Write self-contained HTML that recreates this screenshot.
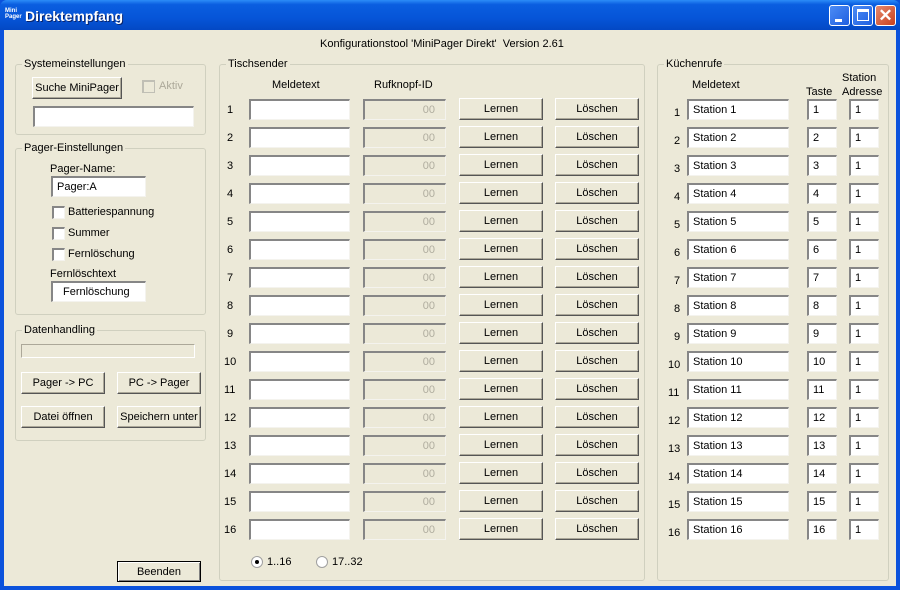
<!DOCTYPE html>
<html><head><meta charset="utf-8"><style>
*{box-sizing:border-box}
body{margin:0;width:900px;height:590px;overflow:hidden;background:#0B52DC;font-family:"Liberation Sans",sans-serif;font-size:11px;color:#000;position:relative}
.a{position:absolute}
#tb{left:0;top:0;width:900px;height:30px;background:linear-gradient(#2C8CF8 0%,#0A5EE0 15%,#0655D8 60%,#0348C4 100%);border-radius:7px 7px 0 0}
#client{left:4px;top:30px;width:892px;height:556px;background:#ECE9D8}
.g{position:absolute;border:1px solid #D0D0BF;border-radius:3px}
.lg{position:absolute;top:-7px;left:6px;background:#ECE9D8;padding:0 2px;line-height:12px}
.t{position:absolute;white-space:nowrap;line-height:13px}
.in{position:absolute;background:#fff;border-top:2px solid #868686;border-left:2px solid #868686;border-right:1px solid #F4F3EE;border-bottom:1px solid #F4F3EE;height:21px;line-height:18px;padding-left:4px;white-space:nowrap}
.dis{background:#ECE9D8;color:#B0AD9F;text-align:right;padding-right:10px}
.b{position:absolute;background:#ECE9D8;border:1px solid;border-color:#fff #555 #555 #fff;box-shadow:inset -1px -1px #ACA899;height:22px;line-height:21px;text-align:center;white-space:nowrap}
.cb{position:absolute;width:13px;height:13px;background:#fff;border-top:2px solid #868686;border-left:2px solid #868686;border-right:1px solid #f4f3ee;border-bottom:1px solid #f4f3ee}
.tbb{position:absolute;top:5px;width:21px;height:21px;border:1px solid #fff;border-radius:3px;background:linear-gradient(135deg,#4C8CF5,#1F5FE0)}
</style></head><body>
<div id="tb" class="a">
 <div class="a" style="left:5px;top:8px;color:#fff;font-size:6px;line-height:6px;font-weight:bold">Mini<br>Pager</div>
 <div class="a" style="left:25px;top:8px;color:#fff;font-weight:bold;font-size:14px;text-shadow:1px 1px #0a246a">Direktempfang</div>
 <div class="tbb" style="left:829px"><div class="a" style="left:5px;top:13px;width:7px;height:3px;background:#fff"></div></div>
 <div class="tbb" style="left:852px"><div class="a" style="left:4px;top:3px;width:12px;height:12px;border:1px solid #fff;border-top-width:3px"></div></div>
 <div class="tbb" style="left:875px;background:linear-gradient(135deg,#E58A6E,#C8401E)"><div class="a" style="left:0;top:0;width:19px;height:19px;color:#fff;font-size:17px;line-height:19px;text-align:center;font-weight:bold">✕</div></div>
</div>
<div id="client" class="a"></div>
<div class="t" style="left:320px;top:38px">Konfigurationstool 'MiniPager Direkt'&nbsp; Version 2.61</div>

<div class="g" style="left:15px;top:64px;width:191px;height:71px"><div class="lg">Systemeinstellungen</div></div>
<div class="b" style="left:32px;top:77px;width:90px">Suche MiniPager</div>
<div class="cb" style="left:142px;top:80px;background:#ECE9D8;border-color:#C0BFB5"></div>
<div class="t" style="left:159px;top:80px;color:#ACA899">Aktiv</div>
<div class="in" style="left:33px;top:106px;width:161px"></div>

<div class="g" style="left:15px;top:148px;width:191px;height:167px"><div class="lg">Pager-Einstellungen</div></div>
<div class="t" style="left:50px;top:163px">Pager-Name:</div>
<div class="in" style="left:51px;top:176px;width:95px">Pager:A</div>
<div class="cb" style="left:52px;top:206px"></div><div class="t" style="left:68px;top:206px">Batteriespannung</div>
<div class="cb" style="left:52px;top:227px"></div><div class="t" style="left:68px;top:227px">Summer</div>
<div class="cb" style="left:52px;top:248px"></div><div class="t" style="left:68px;top:248px">Fernlöschung</div>
<div class="t" style="left:50px;top:268px">Fernlöschtext</div>
<div class="in" style="left:51px;top:281px;width:95px;padding-left:10px">Fernlöschung</div>

<div class="g" style="left:15px;top:330px;width:191px;height:111px"><div class="lg">Datenhandling</div></div>
<div class="a" style="left:21px;top:344px;width:174px;height:14px;border:1px solid #ACA899;border-right-color:#fff;border-bottom-color:#fff"></div>
<div class="b" style="left:21px;top:372px;width:84px">Pager -&gt; PC</div>
<div class="b" style="left:117px;top:372px;width:84px">PC -&gt; Pager</div>
<div class="b" style="left:21px;top:406px;width:84px">Datei öffnen</div>
<div class="b" style="left:117px;top:406px;width:84px">Speichern unter</div>
<div class="b" style="left:117px;top:561px;width:84px;height:21px;border:1px solid #000;box-shadow:inset 1px 1px #fff,inset -1px -1px #808080;line-height:20px">Beenden</div>

<div class="g" style="left:219px;top:64px;width:426px;height:517px"><div class="lg">Tischsender</div></div>
<div class="t" style="left:272px;top:79px">Meldetext</div>
<div class="t" style="left:374px;top:79px">Rufknopf-ID</div>

<div class="g" style="left:657px;top:64px;width:232px;height:517px"><div class="lg">Küchenrufe</div></div>
<div class="t" style="left:692px;top:79px">Meldetext</div>
<div class="t" style="left:806px;top:86px">Taste</div>
<div class="t" style="left:842px;top:72px">Station</div>
<div class="t" style="left:842px;top:86px">Adresse</div>

<div class="a" style="left:251px;top:556px;width:12px;height:12px;border-radius:50%;background:#fff;border:1px solid #A0A0A0"><div class="a" style="left:3px;top:3px;width:4px;height:4px;border-radius:50%;background:#000"></div></div>
<div class="t" style="left:267px;top:556px">1..16</div>
<div class="a" style="left:316px;top:556px;width:12px;height:12px;border-radius:50%;background:#fff;border:1px solid #A0A0A0"></div>
<div class="t" style="left:332px;top:556px">17..32</div>

<div class="t" style="left:227px;top:104px">1</div><div class="in" style="left:249px;top:99px;width:101px"></div><div class="in dis" style="left:363px;top:99px;width:83px">00</div><div class="b" style="left:459px;top:98px;width:84px">Lernen</div><div class="b" style="left:555px;top:98px;width:84px">Löschen</div>
<div class="t" style="left:227px;top:132px">2</div><div class="in" style="left:249px;top:127px;width:101px"></div><div class="in dis" style="left:363px;top:127px;width:83px">00</div><div class="b" style="left:459px;top:126px;width:84px">Lernen</div><div class="b" style="left:555px;top:126px;width:84px">Löschen</div>
<div class="t" style="left:227px;top:160px">3</div><div class="in" style="left:249px;top:155px;width:101px"></div><div class="in dis" style="left:363px;top:155px;width:83px">00</div><div class="b" style="left:459px;top:154px;width:84px">Lernen</div><div class="b" style="left:555px;top:154px;width:84px">Löschen</div>
<div class="t" style="left:227px;top:188px">4</div><div class="in" style="left:249px;top:183px;width:101px"></div><div class="in dis" style="left:363px;top:183px;width:83px">00</div><div class="b" style="left:459px;top:182px;width:84px">Lernen</div><div class="b" style="left:555px;top:182px;width:84px">Löschen</div>
<div class="t" style="left:227px;top:216px">5</div><div class="in" style="left:249px;top:211px;width:101px"></div><div class="in dis" style="left:363px;top:211px;width:83px">00</div><div class="b" style="left:459px;top:210px;width:84px">Lernen</div><div class="b" style="left:555px;top:210px;width:84px">Löschen</div>
<div class="t" style="left:227px;top:244px">6</div><div class="in" style="left:249px;top:239px;width:101px"></div><div class="in dis" style="left:363px;top:239px;width:83px">00</div><div class="b" style="left:459px;top:238px;width:84px">Lernen</div><div class="b" style="left:555px;top:238px;width:84px">Löschen</div>
<div class="t" style="left:227px;top:272px">7</div><div class="in" style="left:249px;top:267px;width:101px"></div><div class="in dis" style="left:363px;top:267px;width:83px">00</div><div class="b" style="left:459px;top:266px;width:84px">Lernen</div><div class="b" style="left:555px;top:266px;width:84px">Löschen</div>
<div class="t" style="left:227px;top:300px">8</div><div class="in" style="left:249px;top:295px;width:101px"></div><div class="in dis" style="left:363px;top:295px;width:83px">00</div><div class="b" style="left:459px;top:294px;width:84px">Lernen</div><div class="b" style="left:555px;top:294px;width:84px">Löschen</div>
<div class="t" style="left:227px;top:328px">9</div><div class="in" style="left:249px;top:323px;width:101px"></div><div class="in dis" style="left:363px;top:323px;width:83px">00</div><div class="b" style="left:459px;top:322px;width:84px">Lernen</div><div class="b" style="left:555px;top:322px;width:84px">Löschen</div>
<div class="t" style="left:224px;top:356px">10</div><div class="in" style="left:249px;top:351px;width:101px"></div><div class="in dis" style="left:363px;top:351px;width:83px">00</div><div class="b" style="left:459px;top:350px;width:84px">Lernen</div><div class="b" style="left:555px;top:350px;width:84px">Löschen</div>
<div class="t" style="left:224px;top:384px">11</div><div class="in" style="left:249px;top:379px;width:101px"></div><div class="in dis" style="left:363px;top:379px;width:83px">00</div><div class="b" style="left:459px;top:378px;width:84px">Lernen</div><div class="b" style="left:555px;top:378px;width:84px">Löschen</div>
<div class="t" style="left:224px;top:412px">12</div><div class="in" style="left:249px;top:407px;width:101px"></div><div class="in dis" style="left:363px;top:407px;width:83px">00</div><div class="b" style="left:459px;top:406px;width:84px">Lernen</div><div class="b" style="left:555px;top:406px;width:84px">Löschen</div>
<div class="t" style="left:224px;top:440px">13</div><div class="in" style="left:249px;top:435px;width:101px"></div><div class="in dis" style="left:363px;top:435px;width:83px">00</div><div class="b" style="left:459px;top:434px;width:84px">Lernen</div><div class="b" style="left:555px;top:434px;width:84px">Löschen</div>
<div class="t" style="left:224px;top:468px">14</div><div class="in" style="left:249px;top:463px;width:101px"></div><div class="in dis" style="left:363px;top:463px;width:83px">00</div><div class="b" style="left:459px;top:462px;width:84px">Lernen</div><div class="b" style="left:555px;top:462px;width:84px">Löschen</div>
<div class="t" style="left:224px;top:496px">15</div><div class="in" style="left:249px;top:491px;width:101px"></div><div class="in dis" style="left:363px;top:491px;width:83px">00</div><div class="b" style="left:459px;top:490px;width:84px">Lernen</div><div class="b" style="left:555px;top:490px;width:84px">Löschen</div>
<div class="t" style="left:224px;top:524px">16</div><div class="in" style="left:249px;top:519px;width:101px"></div><div class="in dis" style="left:363px;top:519px;width:83px">00</div><div class="b" style="left:459px;top:518px;width:84px">Lernen</div><div class="b" style="left:555px;top:518px;width:84px">Löschen</div>

<div class="t" style="left:674px;top:107px">1</div><div class="in" style="left:687px;top:99px;width:102px">Station 1</div><div class="in" style="left:807px;top:99px;width:30px">1</div><div class="in" style="left:849px;top:99px;width:30px">1</div>
<div class="t" style="left:674px;top:135px">2</div><div class="in" style="left:687px;top:127px;width:102px">Station 2</div><div class="in" style="left:807px;top:127px;width:30px">2</div><div class="in" style="left:849px;top:127px;width:30px">1</div>
<div class="t" style="left:674px;top:163px">3</div><div class="in" style="left:687px;top:155px;width:102px">Station 3</div><div class="in" style="left:807px;top:155px;width:30px">3</div><div class="in" style="left:849px;top:155px;width:30px">1</div>
<div class="t" style="left:674px;top:191px">4</div><div class="in" style="left:687px;top:183px;width:102px">Station 4</div><div class="in" style="left:807px;top:183px;width:30px">4</div><div class="in" style="left:849px;top:183px;width:30px">1</div>
<div class="t" style="left:674px;top:219px">5</div><div class="in" style="left:687px;top:211px;width:102px">Station 5</div><div class="in" style="left:807px;top:211px;width:30px">5</div><div class="in" style="left:849px;top:211px;width:30px">1</div>
<div class="t" style="left:674px;top:247px">6</div><div class="in" style="left:687px;top:239px;width:102px">Station 6</div><div class="in" style="left:807px;top:239px;width:30px">6</div><div class="in" style="left:849px;top:239px;width:30px">1</div>
<div class="t" style="left:674px;top:275px">7</div><div class="in" style="left:687px;top:267px;width:102px">Station 7</div><div class="in" style="left:807px;top:267px;width:30px">7</div><div class="in" style="left:849px;top:267px;width:30px">1</div>
<div class="t" style="left:674px;top:303px">8</div><div class="in" style="left:687px;top:295px;width:102px">Station 8</div><div class="in" style="left:807px;top:295px;width:30px">8</div><div class="in" style="left:849px;top:295px;width:30px">1</div>
<div class="t" style="left:674px;top:331px">9</div><div class="in" style="left:687px;top:323px;width:102px">Station 9</div><div class="in" style="left:807px;top:323px;width:30px">9</div><div class="in" style="left:849px;top:323px;width:30px">1</div>
<div class="t" style="left:668px;top:359px">10</div><div class="in" style="left:687px;top:351px;width:102px">Station 10</div><div class="in" style="left:807px;top:351px;width:30px">10</div><div class="in" style="left:849px;top:351px;width:30px">1</div>
<div class="t" style="left:668px;top:387px">11</div><div class="in" style="left:687px;top:379px;width:102px">Station 11</div><div class="in" style="left:807px;top:379px;width:30px">11</div><div class="in" style="left:849px;top:379px;width:30px">1</div>
<div class="t" style="left:668px;top:415px">12</div><div class="in" style="left:687px;top:407px;width:102px">Station 12</div><div class="in" style="left:807px;top:407px;width:30px">12</div><div class="in" style="left:849px;top:407px;width:30px">1</div>
<div class="t" style="left:668px;top:443px">13</div><div class="in" style="left:687px;top:435px;width:102px">Station 13</div><div class="in" style="left:807px;top:435px;width:30px">13</div><div class="in" style="left:849px;top:435px;width:30px">1</div>
<div class="t" style="left:668px;top:471px">14</div><div class="in" style="left:687px;top:463px;width:102px">Station 14</div><div class="in" style="left:807px;top:463px;width:30px">14</div><div class="in" style="left:849px;top:463px;width:30px">1</div>
<div class="t" style="left:668px;top:499px">15</div><div class="in" style="left:687px;top:491px;width:102px">Station 15</div><div class="in" style="left:807px;top:491px;width:30px">15</div><div class="in" style="left:849px;top:491px;width:30px">1</div>
<div class="t" style="left:668px;top:527px">16</div><div class="in" style="left:687px;top:519px;width:102px">Station 16</div><div class="in" style="left:807px;top:519px;width:30px">16</div><div class="in" style="left:849px;top:519px;width:30px">1</div>
</body></html>
